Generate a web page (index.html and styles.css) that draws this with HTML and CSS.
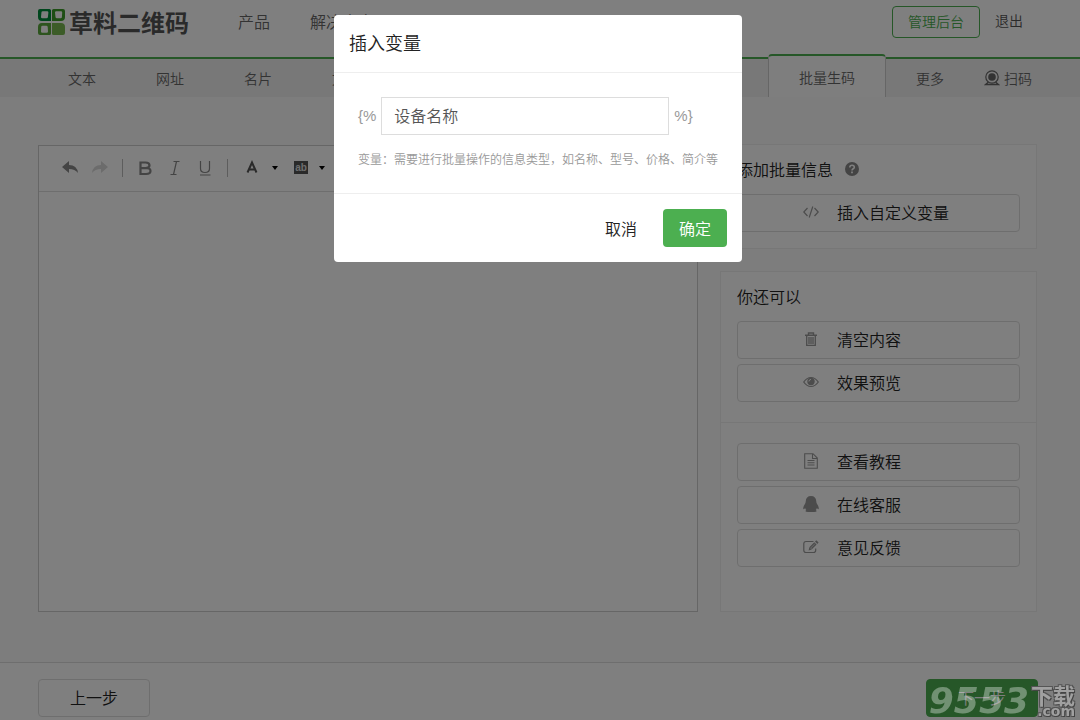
FILE: index.html
```html
<!DOCTYPE html>
<html lang="zh-CN">
<head>
<meta charset="utf-8">
<meta name="viewport" content="width=device-width, initial-scale=1">
<title>草料二维码</title>
<link rel="stylesheet" href="styles.css">
</head>
<body>
<div class="page">
  <header class="header">
    <a class="logo" href="#">
      <svg class="logo-mark" viewBox="0 0 27 28" aria-hidden="true">
        <path fill="#008c3a" fill-rule="evenodd" d="M2 1h9.500q1.500 0 1.500 1.500V13H4Q0 13 0 9V3q0-2 2-2zM3.500 4l-.5 5q0 1.300 1.300 1.300h4.200q1.300 0 1.400-1.300l.5-4.500q0-1.200-1.200-1.200H4.700Q3.600 3.300 3.500 4z"/>
        <path fill="#3c9c28" fill-rule="evenodd" d="M15.500 1H25q2 0 2 2v6q0 4-4 4h-9V2.500Q14 1 15.500 1zM17 4.500l.5 4.500q.1 1.300 1.400 1.300h3.700q1.300 0 1.300-1.300l.3-4.500q0-1.200-1.200-1.200h-4.800Q17 3.300 17 4.500z"/>
        <path fill="#5aa83c" fill-rule="evenodd" d="M4 15h9v10.500q0 1.500-1.500 1.500H2q-2 0-2-2v-6q0-4 4-4zM4.500 17.700q-1.300 0-1.300 1.300L3 23.500q0 1.200 1.200 1.200h4.600q1.200 0 1.200-1.200l-.3-4.500q-.1-1.300-1.400-1.300z"/>
        <path fill="#78b850" d="M14 15h9q4 0 4 4v6q0 2-2 2h-9.500q-1.500 0-1.500-1.500z"/>
      </svg>
      <span class="logo-text">草料二维码</span>
    </a>
    <nav class="main-nav">
      <a href="#">产品</a>
      <a href="#">解决方案</a>
    </nav>
    <div class="account">
      <a class="console" href="#">管理后台</a>
      <a class="logout" href="#">退出</a>
    </div>
  </header>
  <nav class="tabs">
    <a href="#">文本</a>
    <a href="#">网址</a>
    <a href="#">名片</a>
    <a href="#">文件</a>
    <a class="active" href="#">批量生码</a>
    <a href="#">更多</a>
    <a class="scan" href="#">
      <svg class="icon" viewBox="0 0 16 16" fill="none" stroke="currentColor" aria-hidden="true">
        <circle cx="8" cy="7" r="6.200" stroke-width="1.200"/><circle cx="8" cy="7" r="3.800" fill="currentColor" stroke="none"/><path d="M4.500 12l-3 2.500h13l-3-2.500" stroke-width="1.300"/>
      </svg>扫码</a>
  </nav>
  <main class="content">
    <section class="editor">
      <div class="toolbar">
        <button type="button" aria-label="撤销"><svg class="glyph" viewBox="0 0 18 18"><path fill="#888" d="M1 8l7-6v4q8 0 9 8-3-4-9-4v4z"/></svg></button>
        <button type="button" aria-label="重做"><svg class="glyph" viewBox="0 0 18 18"><path fill="#d8d8d8" d="M17 8l-7-6v4Q2 6 1 14q3-4 9-4v4z"/></svg></button>
        <span class="rule"></span>
        <button type="button" aria-label="粗体"><svg class="glyph" viewBox="0 0 18 18" fill="none" stroke="#888" stroke-width="2.200"><path d="M4.500 3.500h5q4 0 4 2.800t-4 2.800h-5zM4.500 9h5.500q4.500 0 4.500 3t-4.500 3H4.500z"/></svg></button>
        <button type="button" aria-label="斜体"><svg class="glyph" viewBox="0 0 18 18" fill="none" stroke="#888" stroke-width="1.200"><path d="M7.500 2.500h6M4.500 15.500h6M10.500 2.500l-3 13"/></svg></button>
        <button type="button" aria-label="下划线"><svg class="glyph" viewBox="0 0 18 18" fill="none" stroke="#888" stroke-width="1.200"><path d="M4.500 2v7.500q0 4 4.500 4t4.500-4V2M4 16h10.500"/></svg></button>
        <span class="rule"></span>
        <button type="button" class="pick" aria-label="文字颜色"><svg class="glyph" viewBox="0 0 18 18" fill="none" stroke="#555" stroke-width="2"><path d="M4.500 13.500L9 3.500l4.500 10M6 10.500h6"/></svg><span class="caret"></span></button>
        <button type="button" class="pick" aria-label="背景颜色"><span class="ab">ab</span><span class="caret"></span></button>
      </div>
      <div class="canvas" contenteditable="true" role="textbox" aria-label="内容"></div>
    </section>
    <aside class="side">
      <section class="card">
        <div class="block">
          <h2>添加批量信息
            <svg class="help" viewBox="0 0 14 14" aria-hidden="true"><circle cx="7" cy="7" r="7" fill="#888"/><path d="M4.800 5.500q0-2.200 2.300-2.200t2.200 1.900q0 1-1.100 1.600T7 8.500" fill="none" stroke="#fff" stroke-width="1.600"/><path fill="#fff" d="M6.100 9.500h1.800v1.700H6.100z"/></svg>
          </h2>
          <button type="button" class="action"><svg class="icon" viewBox="0 0 16 16" fill="none" stroke="currentColor" aria-hidden="true"><path d="M4.500 4L.8 8l3.700 4M11.500 4l3.700 4-3.700 4M9.800 2.500l-3.600 11" stroke-width="1.200"/></svg>插入自定义变量</button>
        </div>
      </section>
      <section class="card grow">
        <div class="block">
          <h2>你还可以</h2>
          <button type="button" class="action"><svg class="icon" viewBox="0 0 16 16" fill="none" stroke="currentColor" aria-hidden="true"><path d="M2 4.200h12M5.500 4V2h5v2" stroke-width="1.400"/><path d="M3.700 4.500v9.800h8.600V4.500M6 6v7M8 6v7M10 6v7" stroke-width="1.300"/></svg>清空内容</button>
          <button type="button" class="action"><svg class="icon" viewBox="0 0 16 16" aria-hidden="true"><path d="M.7 8q3.100-4.500 7.300-4.500T15.300 8q-3.100 4.500-7.300 4.500T.7 8z" fill="none" stroke="currentColor" stroke-width="1.200"/><circle cx="8" cy="7.500" r="3.700" fill="currentColor"/><path d="M5.900 7.500Q6 5.500 8 5.400" fill="none" stroke="#fff"/></svg>效果预览</button>
        </div>
        <div class="block links">
          <button type="button" class="action"><svg class="icon" viewBox="0 0 16 16" fill="none" stroke="currentColor" aria-hidden="true"><path d="M1.700.7h8.300l4.300 4.300v10.300H1.700zM9.500.7v4.800h4.800M4.500 7.500h7M4.500 9.700h7M4.500 12h7" stroke-width="1.100"/></svg>查看教程</button>
          <button type="button" class="action"><svg class="icon" viewBox="0 0 16 16" aria-hidden="true"><path fill="currentColor" d="M8 0q5 0 5.300 5.500.1 1.500.8 2.500 1.700 2.500 1.700 4 0 1.300-.6 1.200-.7-.1-1.300-1.200-.4 1.300-1.200 2 1 .5.900 1.200-.1.800-2.500.8H5q-2.400 0-2.500-.8-.1-.7.800-1.200-.8-.7-1.200-2-.6 1.100-1.300 1.200-.6.100-.6-1.200 0-1.500 1.700-4 .7-1 .8-2.500Q3 0 8 0z"/></svg>在线客服</button>
          <button type="button" class="action"><svg class="icon" viewBox="0 0 16 16" fill="none" stroke="currentColor" aria-hidden="true"><path d="M10.500 2.500H3Q.8 2.500.8 4.700v6.600q0 2.200 2.200 2.200h7.500q2.200 0 2.200-2.200V9.500" stroke-width="1.200"/><path fill="currentColor" stroke="none" d="M13.300 1.300l2.300 2.300-1.300 1.300L12 2.600zM11.300 3.300l2.300 2.300-5 5-3 .8.700-3.100z"/><path d="M7 8.500L9 10.500M8 8.700L11.800 5" stroke="#fff" stroke-width=".6"/></svg>意见反馈</button>
        </div>
      </section>
    </aside>
  </main>
  <footer class="footer">
    <button type="button" class="step">上一步</button>
    <button type="button" class="step next">下一步</button>
  </footer>
</div>

<div class="overlay">
  <form class="dialog" role="dialog" aria-modal="true" aria-labelledby="dialog-title">
    <h1 id="dialog-title">插入变量</h1>
    <div class="dialog-body">
      <label class="field"><span>{%</span><input type="text" value="设备名称" aria-label="变量名称"><span>%}</span></label>
      <p>变量：需要进行批量操作的信息类型，如名称、型号、价格、简介等</p>
    </div>
    <div class="dialog-foot">
      <button type="button" class="cancel">取消</button>
      <button type="button" class="confirm">确定</button>
    </div>
  </form>
</div>

<div class="watermark">
  <span class="wm-num">9553</span>
  <span class="wm-side"><span class="wm-cn">下载</span><span class="wm-com">.com</span></span>
</div>
</body>
</html>
```
FILE: styles.css
```css
* { box-sizing: border-box; }
body {
  margin: 0;
  font-family: "Noto Sans CJK SC", sans-serif;
  font-size: 16px;
  line-height: 24px;
  font-weight: 350;
  color: #222;
  background: #fafafa;
}
a { color: inherit; text-decoration: none; }
button, input { font: inherit; color: inherit; }
button { cursor: pointer; }
h1, h2, p { margin: 0; font-weight: inherit; }
.icon { width: 16px; height: 16px; flex: none; }

.page { display: flex; flex-direction: column; min-height: 100vh; }
.header {
  display: flex;
  align-items: flex-start;
  height: 59px;
  padding: 6px 57px 0 38px;
  background: #fff;
  border-bottom: 2px solid #4caf50;
}
.logo { display: flex; align-items: center; gap: 4px; height: 32px; }
.logo-mark { width: 27px; height: 28px; }
.logo-text { font-size: 24px; font-weight: 700; color: #555; }
.main-nav { display: flex; gap: 40px; padding: 3px 0 0 49px; color: #666; }
.account { display: flex; align-items: center; gap: 15px; margin-left: auto; font-size: 14px; color: #555; }
.console {
  height: 32px;
  padding: 0 15px;
  line-height: 29px;
  color: #4caf50;
  border: 1px solid #4caf50;
  border-radius: 4px;
}
.logout { line-height: 29px; padding-bottom: 3px; }

.tabs {
  display: flex;
  align-items: center;
  height: 38px;
  padding: 0 18px 0 38px;
  font-size: 14px;
  color: #666;
  background: #f0f0f0;
}
.tabs a { padding: 0 30px; }
.tabs .active {
  height: 43px;
  margin: -5px 0 0 auto;
  line-height: 43px;
  background: #fdfdfd;
  border: solid #ccc;
  border-width: 0 1px;
  border-top: 2px solid #4caf50;
  border-radius: 4px 4px 0 0;
}
.tabs .scan { display: flex; align-items: center; gap: 4px; padding-left: 10px; color: #666; }

.content { display: flex; flex: 1; gap: 22px; padding: 48px 43px 50px 38px; }
.editor { display: flex; flex: 1; flex-direction: column; background: #fff; border: 1px solid #ccc; }
.toolbar { display: flex; align-items: center; height: 46px; padding: 0 16px 2px; border-bottom: 1px solid #ddd; }
.toolbar button { display: flex; align-items: center; padding: 0 6px; background: none; border: 0; }
.glyph { width: 18px; height: 18px; }
.rule { width: 1px; height: 18px; margin: 0 7px; background: #bbb; }
.toolbar .pick { gap: 11px; padding: 0 8px; }
.caret { border: 3px solid transparent; border-top: 4px solid #000; border-bottom: 0; }
.ab { width: 14px; font: 700 10px/13px "Liberation Sans", sans-serif; color: #ddd; background: #555; }
.canvas { flex: 1; outline: 0; }

.side { display: flex; flex: 0 0 317px; flex-direction: column; gap: 22px; margin-top: -1px; }
.card { background: #fff; border: 1px solid #eee; }
.grow { flex: 1; }
.block { display: flex; flex-direction: column; gap: 5px; padding: 12px 16px 16px; }
.grow .block { padding-bottom: 20px; }
.block h2 { display: flex; align-items: center; gap: 12px; margin-bottom: 8px; font-size: 16px; line-height: 24px; }
.help { width: 14px; height: 14px; }
.action {
  display: flex;
  align-items: center;
  gap: 18px;
  height: 38px;
  padding: 0 0 2px 65px;
  background: #fff;
  border: 1px solid #ddd;
  border-radius: 4px;
}
.action .icon { color: #999; }
.grow .links { padding-top: 20px; border-top: 1px solid #eee; }

.footer {
  display: flex;
  justify-content: space-between;
  height: 58px;
  padding: 16px 42px 0 38px;
  background: #fff;
  border-top: 1px solid #ddd;
}
.step { width: 112px; height: 38px; padding: 0 0 2px; background: #fff; border: 1px solid #ddd; border-radius: 4px; }
.next { color: #fff; background: #4caf50; border-color: #4caf50; }

.overlay {
  position: fixed;
  inset: 0;
  z-index: 10;
  display: flex;
  justify-content: center;
  align-items: flex-start;
  padding: 15px 4px 0 0;
  background: rgba(0, 0, 0, .5);
}
.dialog { width: 408px; background: #fff; border-radius: 4px; }
.dialog h1 { padding: 14px 15px 16px; font-size: 18px; line-height: 27px; border-bottom: 1px solid #eee; }
.dialog-body { padding: 24px 24px 24px; color: #999; }
.field { display: flex; align-items: center; gap: 5px; font-size: 15px; }
.field span { font-family: "Liberation Sans", sans-serif; }
.field input {
  width: 288px;
  height: 38px;
  padding: 0 12px 2px;
  font-size: 16px;
  color: #555;
  background: #fff;
  border: 1px solid #ddd;
  border-radius: 0;
}
.dialog-body p { margin-top: 14px; font-size: 12px; line-height: 20px; white-space: nowrap; }
.dialog-foot { display: flex; justify-content: flex-end; gap: 10px; padding: 15px; border-top: 1px solid #eee; }
.dialog-foot button { width: 64px; height: 38px; padding: 0; border: 0; border-radius: 4px; background: #fff; }
.dialog-foot .confirm { color: #fff; background: #4caf50; }

.watermark {
  position: fixed;
  right: 5px;
  bottom: 4px;
  z-index: 20;
  display: flex;
  align-items: flex-end;
  gap: 2px;
  font-weight: 700;
  color: rgba(255, 255, 255, .35);
  pointer-events: none;
}
.wm-num { font: italic 700 36px/30px "DejaVu Sans", sans-serif; }
.wm-side {
  display: flex;
  flex-direction: column;
  align-items: flex-end;
  color: #a0a0a0;
  text-shadow: 1px 1px #444, -1px -1px #555, 1px -1px #555, -1px 1px #555;
}
.wm-cn { font-size: 22px; line-height: 24px; }
.wm-com { font: 700 14px/10px "DejaVu Sans", sans-serif; }
```
